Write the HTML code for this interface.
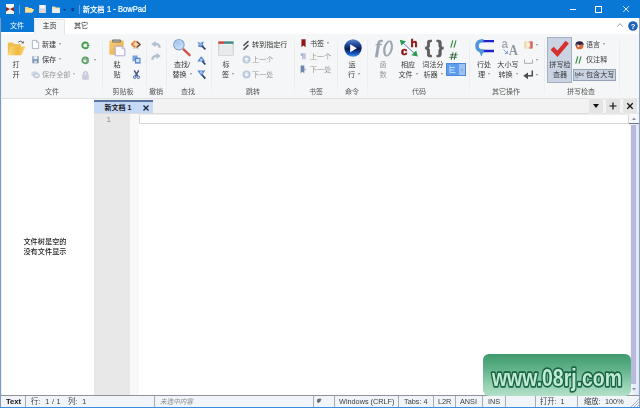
<!DOCTYPE html>
<html lang="zh-CN">
<head>
<meta charset="utf-8">
<title>新文档 1 - BowPad</title>
<style>
*{margin:0;padding:0;box-sizing:border-box}
html,body{width:640px;height:408px;overflow:hidden;background:#fff}
#root{position:absolute;left:0;top:0;width:640px;height:408px;overflow:hidden;filter:blur(0.4px)}
body{position:relative;font-family:"Liberation Sans","Noto Sans CJK SC",sans-serif;font-size:8px;line-height:10px;color:#222}
.a{position:absolute}
.t{position:absolute;white-space:nowrap;font-size:7.1px;line-height:10px;color:#383838}
.c{position:absolute;white-space:nowrap;font-size:7.1px;line-height:10px;text-align:center;color:#383838}
.g{color:#9a9a9a}
.sep{position:absolute;top:37px;height:57px;width:1px;background:linear-gradient(180deg,#f2f3f5 0,#eaecee 20%,#eaecee 80%,#f2f3f5 100%)}
.gl{position:absolute;top:86.500px;white-space:nowrap;font-size:7px;line-height:10px;text-align:center;color:#555;width:60px}
.dd{display:inline-block;width:0;height:0;border-left:1.7px solid transparent;border-right:1.7px solid transparent;border-top:2px solid #8c8c8c;vertical-align:middle;margin-left:3px;position:relative;top:-0.8px}
.ss{position:absolute;top:396px;height:11px;width:1px;background:#a3abb6}
.st{position:absolute;top:396.800px;white-space:nowrap;font-size:7.750px;line-height:10px;color:#3c3c3c;transform:scaleX(0.940);transform-origin:0 50%}
svg{position:absolute;overflow:visible}
</style>
</head>
<body>
<div id="root">

<!-- ===== title bar ===== -->
<div class="a" id="titlebar" style="left:0;top:0;width:640px;height:18px;background:#0877d6"></div>
<div class="a" id="filetab" style="left:0;top:18px;width:34px;height:14.300px;background:#0877d6"></div>
<div class="a" id="hometab" style="left:34px;top:19px;width:31px;height:14.500px;background:#f5f6f7;border:1px solid #e3e5e8;border-bottom:none"></div>
<div class="t" style="left:82.800px;top:4.500px;color:#fff;font-size:7.200px;font-weight:500;-webkit-text-stroke:0.200px #fff">新文档</div><div class="t" style="left:107.300px;top:4.300px;color:#fff;font-size:8.600px;transform:scaleX(0.880);transform-origin:0 50%;-webkit-text-stroke:0.200px #fff">1 - BowPad</div>
<div class="c" style="left:0;top:21.200px;width:34px;color:#fff">文件</div>
<div class="c" style="left:34px;top:21.200px;width:31px;color:#222">主页</div>
<div class="c" style="left:66px;top:21.200px;width:30px;color:#222">其它</div>


<!-- title bar icons -->
<svg style="left:6px;top:4px" width="8" height="10" viewBox="0 0 8 10"><rect x="0" y="0" width="8" height="10" fill="#f4f4f4"/><path d="M0 3 L4 5 L0 7.4Z M8 3 L4 5 L8 7.4Z" fill="#8a2a1a"/><rect x="0" y="0" width="8" height="2.2" fill="#fff"/></svg>
<div class="a" style="left:19px;top:5px;width:1px;height:9px;background:#5fa0e6"></div>
<svg style="left:25px;top:6px" width="9" height="7" viewBox="0 0 9 7"><path d="M0 1 L3 1 L4 2 L7 2 L7 3 L9 3.6 L7 6.6 L0 6.6Z" fill="#f6d57e"/><path d="M1.5 3.2 L9 3.2 L7.3 6.6 L0 6.6Z" fill="#fbe39b"/></svg>
<svg style="left:39px;top:5px" width="7" height="8" viewBox="0 0 7 8"><rect x="0" y="0" width="7" height="8" fill="#c9d3e4"/><rect x="1.2" y="0" width="4.6" height="3.4" fill="#f4f6fa"/><rect x="1.6" y="5" width="3.8" height="3" fill="#e8d9c8"/></svg>
<svg style="left:52px;top:6px" width="8" height="7" viewBox="0 0 8 7"><path d="M0 0.6 L3 0.6 L3.8 1.6 L8 1.6 L8 7 L0 7Z" fill="#f1dcae"/><rect x="0.6" y="2.6" width="6.8" height="4.4" fill="#e9ecf2"/></svg>
<svg style="left:62.800px;top:8.800px" width="3" height="2.300" viewBox="0 0 4 3"><path d="M0 0 L4 0 L2 2.4Z" fill="#1a2a78"/></svg>
<svg style="left:70.800px;top:7.600px" width="3.600" height="3.800" viewBox="0 0 5 5"><rect x="0.3" y="0" width="4.4" height="0.9" fill="#16206a"/><path d="M0 2 L5 2 L2.5 4.6Z" fill="#16206a"/></svg>
<div class="a" style="left:78.500px;top:5px;width:1px;height:9px;background:#5fa0e6"></div>

<!-- window controls -->
<div class="a" style="left:570px;top:9px;width:5.500px;height:1px;background:#fff"></div>
<div class="a" style="left:595px;top:6px;width:7px;height:6.500px;border:1px solid #fff"></div>
<svg style="left:622.500px;top:6.300px" width="6.200" height="6.200" viewBox="0 0 7 7"><path d="M0.3 0.3 L6.7 6.7 M6.7 0.3 L0.3 6.7" stroke="#fff" stroke-width="1" fill="none"/></svg>
<svg style="left:617px;top:23px" width="6" height="4" viewBox="0 0 6 4"><path d="M0.3 3.6 L3 0.6 L5.700 3.6" stroke="#8a8f96" stroke-width="0.9" fill="none"/></svg>
<svg style="left:628px;top:20.700px" width="10" height="10" viewBox="0 0 10 10"><circle cx="5" cy="5" r="4.8" fill="#1f63b8"/><text x="5" y="7.800" text-anchor="middle" font-family="Liberation Sans, sans-serif" font-size="7.500" font-weight="bold" fill="#fff">?</text></svg>

<!-- ===== ribbon ===== -->
<div class="a" id="ribbon" style="left:1px;top:33.500px;width:638px;height:65.500px;background:#f5f6f7;border-bottom:1px solid #e0e1e3"></div>


<!-- group separators -->
<div class="sep" style="left:102px"></div>
<div class="sep" style="left:146px"></div>
<div class="sep" style="left:166px"></div>
<div class="sep" style="left:211px"></div>
<div class="sep" style="left:294px"></div>
<div class="sep" style="left:337px"></div>
<div class="sep" style="left:367px"></div>
<div class="sep" style="left:469px"></div>
<div class="sep" style="left:544px"></div>
<div class="sep" style="left:619px"></div>

<!-- group labels -->
<div class="gl" style="left:22px">文件</div>
<div class="gl" style="left:93px">剪贴板</div>
<div class="gl" style="left:126px">撤销</div>
<div class="gl" style="left:158px">查找</div>
<div class="gl" style="left:223px">跳转</div>
<div class="gl" style="left:286px">书签</div>
<div class="gl" style="left:322px">命令</div>
<div class="gl" style="left:389px">代码</div>
<div class="gl" style="left:476px">其它操作</div>
<div class="gl" style="left:551px">拼写检查</div>

<!-- ==== group: 文件 ==== -->
<svg id="i-open" style="left:7px;top:39px" width="19" height="17" viewBox="0 0 19 17">
  <defs><linearGradient id="fg" x1="0" y1="0" x2="1" y2="0"><stop offset="0" stop-color="#f8de8a"/><stop offset="0.550" stop-color="#f3b83e"/><stop offset="1" stop-color="#f7d472"/></linearGradient></defs>
  <path d="M0.800 3.400 L5.800 3.400 L7.300 5 L13.800 5 L13.800 15.600 L0.800 15.600Z" fill="#eec050"/>
  <path d="M3.800 7.400 L18.600 7.400 L14.200 16.200 L0.600 16.200Z" fill="url(#fg)"/>
  <path d="M11.200 3.200 Q13.500 1 15.800 3.400" stroke="#4e5664" stroke-width="1" fill="none"/>
  <path d="M14.400 4.200 L16.800 4.400 L16.600 2Z" fill="#4e5664"/>
</svg>
<div class="c" style="left:6px;top:60px;width:20px">打</div>
<div class="c" style="left:6px;top:70px;width:20px">开</div>

<svg id="i-new" style="left:32px;top:40px" width="7" height="9" viewBox="0 0 7 9"><path d="M0.400 0.400 L4.600 0.400 L6.600 2.400 L6.600 8.600 L0.400 8.600Z" fill="#fdfdfe" stroke="#9aa7bb" stroke-width="0.8"/><path d="M4.600 0.400 L4.600 2.400 L6.600 2.400" fill="none" stroke="#9aa7bb" stroke-width="0.700"/></svg>
<div class="t" style="left:42px;top:40px">新建<i class="dd"></i></div>
<svg id="i-save" style="left:32px;top:56px" width="7" height="7.500" viewBox="0 0 8 9"><rect x="0.300" y="0.300" width="7.400" height="8.400" fill="#6c84a8"/><rect x="1.600" y="0.300" width="4.800" height="3.600" fill="#eef2f8"/><rect x="2" y="5.400" width="4" height="3.300" fill="#c9d3e6"/></svg>
<div class="t" style="left:42px;top:55px">保存<i class="dd"></i></div>
<svg id="i-saveall" style="left:31px;top:70px" width="9" height="9" viewBox="0 0 9 9"><ellipse cx="3.600" cy="4" rx="3.400" ry="2.800" fill="#cfd8e6"/><ellipse cx="5.600" cy="5.600" rx="3.200" ry="2.600" fill="#b7c3d6"/><ellipse cx="5.600" cy="5.400" rx="2" ry="1.500" fill="#e6ebf3"/></svg>
<div class="t g" style="left:42px;top:70px">保存全部<i class="dd" style="border-top-color:#aaa"></i></div>

<svg id="i-reload" style="left:80.500px;top:40.500px" width="10" height="9" viewBox="0 0 10 9"><circle cx="4.200" cy="4.400" r="2.900" fill="#eef7ee" stroke="#429c4c" stroke-width="1.900"/><path d="M5 2.400 L9.600 4.400 L5 6.600Z" fill="#f4faf4"/><path d="M5.800 3 L9 4.400 L5.800 6Z" fill="#429c4c"/></svg>
<svg id="i-reload2" style="left:80.500px;top:55.500px" width="10" height="9" viewBox="0 0 10 9"><circle cx="4.200" cy="4.400" r="2.900" fill="#eef3ee" stroke="#58a662" stroke-width="1.800"/><path d="M3 3.400 L5.400 3.400 L5.400 6.200 M7 3 L7 6.200" stroke="#9aa49c" stroke-width="1" fill="none"/></svg>
<i class="dd a" style="position:absolute;left:94px;top:59px;margin:0"></i>
<svg id="i-lock" style="left:82px;top:70.500px" width="7" height="9" viewBox="0 0 7 9"><path d="M1.700 4 L1.700 2.800 Q1.700 0.800 3.500 0.800 Q5.300 0.800 5.300 2.800 L5.300 4" stroke="#c6c9da" stroke-width="1.600" fill="none"/><rect x="0.200" y="3.400" width="6.600" height="5.400" rx="0.800" fill="#c9ccde"/></svg>

<!-- ==== group: 剪贴板 ==== -->
<svg id="i-paste" style="left:109px;top:39px" width="17" height="18" viewBox="0 0 17 18">
  <defs><linearGradient id="pg" x1="0" y1="0" x2="1" y2="1"><stop offset="0" stop-color="#f4cc78"/><stop offset="1" stop-color="#eeb044"/></linearGradient></defs>
  <rect x="0.300" y="1.400" width="14.400" height="14.400" rx="1" fill="url(#pg)"/>
  <rect x="3.200" y="0.600" width="8.600" height="2.800" rx="0.600" fill="#6e6a64"/>
  <rect x="4.200" y="1.600" width="6.600" height="0.900" fill="#d8d4cc"/>
  <path d="M6.200 7.200 L13.200 7.200 L15.800 9.800 L15.800 16.800 L6.200 16.800Z" fill="#fafaff" stroke="#9a98d4" stroke-width="0.800"/>
  <path d="M13.200 7.200 L13.200 9.800 L15.800 9.800" fill="#e4e4f6" stroke="#9a98d4" stroke-width="0.600"/>
</svg>
<div class="c" style="left:107px;top:60px;width:20px">粘</div>
<div class="c" style="left:107px;top:70px;width:20px">贴</div>
<svg id="i-copyhtml" style="left:131px;top:39.800px" width="10" height="9" viewBox="0 0 10 9"><ellipse cx="4.800" cy="4.400" rx="4.600" ry="3.800" fill="#f6d2a4"/><path d="M4.200 1 L0.800 4.200 L4.200 7.400" stroke="#e0803a" stroke-width="1.600" fill="none"/><path d="M5.600 1.400 L9 4.400 L5.600 7.400" stroke="#5a4a44" stroke-width="1.400" fill="none"/><path d="M2 8.300 L8 8.300" stroke="#c8c8cc" stroke-width="0.800"/></svg>
<svg id="i-copy" style="left:132px;top:55px" width="9" height="9" viewBox="0 0 9 9"><rect x="0.500" y="0.500" width="5.200" height="5.800" fill="#7fa3dc"/><rect x="3" y="2.800" width="5.500" height="5.800" fill="#4f7fcb"/><rect x="4.200" y="4" width="3.200" height="3.200" fill="#dbe7f8"/></svg>
<svg id="i-cut" style="left:132.500px;top:70px" width="7" height="9" viewBox="0 0 7 9"><path d="M1.200 0.300 L4.600 6 M5.800 0.300 L2.400 6" stroke="#4a5884" stroke-width="1.500" fill="none"/><circle cx="1.700" cy="7.200" r="1.300" fill="#d4dcf0" stroke="#4668ac" stroke-width="0.900"/><circle cx="5.300" cy="7.200" r="1.300" fill="#d4dcf0" stroke="#4668ac" stroke-width="0.900"/></svg>

<!-- ==== group: 撤销 ==== -->
<svg id="i-undo" style="left:151px;top:41px" width="10" height="7" viewBox="0 0 10 7"><path d="M8.600 6.800 Q8.800 2.800 4 2.900" stroke="#b2bfcf" stroke-width="2.400" fill="none"/><path d="M0.200 3 L4.600 0 L4.600 6Z" fill="#b2bfcf"/></svg>
<svg id="i-redo" style="left:151px;top:52.500px" width="10" height="7" viewBox="0 0 10 7"><path d="M1.400 6.800 Q1.200 2.800 6 2.900" stroke="#b2bfcf" stroke-width="2.400" fill="none"/><path d="M9.800 3 L5.400 0 L5.400 6Z" fill="#b2bfcf"/></svg>

<!-- ==== group: 查找 ==== -->
<svg id="i-find" style="left:173px;top:39px" width="19" height="18" viewBox="0 0 19 18">
  <defs><radialGradient id="lg" cx="0.400" cy="0.300" r="0.800"><stop offset="0" stop-color="#a4c6ee"/><stop offset="0.700" stop-color="#c8dff6"/><stop offset="1" stop-color="#eef5fc"/></radialGradient></defs>
  <path d="M10.600 10.400 L16.600 16.200" stroke="#d4524c" stroke-width="2.300" stroke-linecap="round"/>
  <circle cx="5.900" cy="5.700" r="5.200" fill="url(#lg)" stroke="#86a4cc" stroke-width="1.200"/>
</svg>
<div class="c" style="left:167px;top:60px;width:30px">查找/</div>
<div class="c" style="left:167px;top:70px;width:30px">替换<i class="dd"></i></div>
<svg id="i-f1" style="left:197px;top:40.500px" width="9" height="9" viewBox="0 0 9 9"><path d="M0.300 0.800 L3.400 2 L6.800 0.300 L5.800 3.600 L7 5.600 L3.600 6.200 L1 5.400 L1.800 3Z" fill="#5484cc"/><circle cx="3.600" cy="3.200" r="1.500" fill="#8fb2e4"/><path d="M5 5 L8.400 8.400" stroke="#2a3f70" stroke-width="1.700"/></svg>
<svg id="i-f2" style="left:197px;top:55.500px" width="9" height="9" viewBox="0 0 9 9"><path d="M4.200 0.300 L8.300 5.600 L0.300 5.600Z" fill="#4f80cc"/><circle cx="4.200" cy="4" r="1.400" fill="#a8c4ec"/><path d="M5.400 5.200 L8.300 8.500" stroke="#2a3f70" stroke-width="1.700"/></svg>
<svg id="i-f3" style="left:197px;top:70px" width="9" height="9" viewBox="0 0 9 9"><path d="M0.300 0.500 L8.300 0.500 L4.300 6Z" fill="#4f80cc"/><circle cx="4.200" cy="2.400" r="1.400" fill="#a8c4ec"/><path d="M5 4.800 L8.300 8.600" stroke="#2a3f70" stroke-width="1.700"/></svg>

<!-- ==== group: 跳转 ==== -->
<svg id="i-tabs" style="left:218px;top:41px" width="16" height="15" viewBox="0 0 16 15">
  <defs><linearGradient id="tg" x1="0" y1="0" x2="0" y2="1"><stop offset="0" stop-color="#d4d6d9"/><stop offset="1" stop-color="#eceded"/></linearGradient></defs>
  <rect x="0.300" y="1" width="15.200" height="13.600" fill="url(#tg)" stroke="#c6c8cc" stroke-width="0.600"/>
  <rect x="0.300" y="0.400" width="5.700" height="2.400" fill="#d0403c"/>
  <rect x="6" y="0.400" width="9.500" height="2.400" fill="#3f8c88"/>
  <rect x="1.800" y="4.200" width="12.200" height="9" fill="#e9eaeb"/><rect x="1.800" y="3.200" width="12.200" height="0.900" fill="#fafafa"/>
</svg>
<div class="c" style="left:216px;top:60px;width:20px">标</div>
<div class="c" style="left:216px;top:70px;width:24px">签<i class="dd"></i></div>
<svg id="i-goto" style="left:243px;top:40.500px" width="6" height="9" viewBox="0 0 6 9"><path d="M5 0.600 L0.900 4.300 M5 4.400 L0.900 8.300" stroke="#4c4c50" stroke-width="1.500" fill="none" stroke-linecap="round"/></svg>
<div class="t" style="left:252px;top:40px">转到指定行</div>
<svg id="i-prev" style="left:242px;top:55px" width="9" height="9" viewBox="0 0 9 9"><circle cx="4.500" cy="4.500" r="4" fill="#b9cadf"/><path d="M4.500 2 L7 5 L5.400 5 L5.400 7 L3.600 7 L3.600 5 L2 5Z" fill="#f2f6fb"/></svg>
<div class="t g" style="left:252px;top:55px">上一个</div>
<svg id="i-next" style="left:242px;top:70px" width="9" height="9" viewBox="0 0 9 9"><circle cx="4.500" cy="4.500" r="4" fill="#b9cadf"/><path d="M4.500 7 L7 4 L5.400 4 L5.400 2 L3.600 2 L3.600 4 L2 4Z" fill="#f2f6fb"/></svg>
<div class="t g" style="left:252px;top:70px">下一处</div>

<!-- ==== group: 书签 ==== -->
<svg id="i-bm" style="left:300.500px;top:39px" width="5" height="8.500" viewBox="0 0 6 10" preserveAspectRatio="none"><path d="M0.500 0.300 L5.500 0.300 L5.500 9.600 L3 7.600 L0.500 9.600Z" fill="#8e1a18"/></svg>
<div class="t" style="left:310px;top:38.500px">书签<i class="dd"></i></div>
<svg id="i-bmp" style="left:299.500px;top:52px" width="6.500" height="8.500" viewBox="0 0 8 10" preserveAspectRatio="none"><path d="M2.500 1.500 L7 1.500 L7 9.500 L4.700 7.600 L2.500 9.500Z" fill="#b7c6dc"/><path d="M0.300 3.200 L3 1 L3 5.400Z" fill="#8fa5c6"/></svg>
<div class="t g" style="left:310px;top:51.500px">上一个</div>
<svg id="i-bmn" style="left:300px;top:64.500px" width="6.500" height="8.800" viewBox="0 0 8 10" preserveAspectRatio="none"><path d="M0.800 0.500 L5.300 0.500 L5.300 9.500 L3 7.600 L0.800 9.500Z" fill="#6f87ae"/><path d="M7.800 5 L5 3 L5 7.200Z" fill="#a9b9d2"/></svg>
<div class="t g" style="left:310px;top:64.500px">下一处</div>

<!-- ==== group: 命令 ==== -->
<svg id="i-run" style="left:343.500px;top:39px" width="18" height="18" viewBox="0 0 18 18">
  <defs><linearGradient id="rg" x1="0" y1="0" x2="0" y2="1"><stop offset="0" stop-color="#5a86d4"/><stop offset="0.300" stop-color="#24489c"/><stop offset="0.550" stop-color="#0b1a4c"/><stop offset="0.800" stop-color="#1752b8"/><stop offset="1" stop-color="#3f92f2"/></linearGradient></defs>
  <circle cx="9" cy="9" r="8.700" fill="url(#rg)"/>
  <path d="M6.200 5.200 L12.800 9.200 L6.200 13.300Z" fill="#fff"/>
</svg>
<div class="c" style="left:342px;top:60px;width:20px">运</div>
<div class="c" style="left:342px;top:70px;width:24px">行<i class="dd"></i></div>

<!-- ==== group: 代码 ==== -->
<svg id="i-fx" style="left:373px;top:38px" width="22" height="20" viewBox="0 0 22 20"><text x="2.200" y="15" font-family="Liberation Serif, serif" font-style="italic" font-weight="bold" font-size="18" fill="#99a3b1" stroke="#99a3b1" stroke-width="0.500">f</text><text x="9.800" y="14.600" font-family="Liberation Sans, sans-serif" font-style="italic" font-size="16" fill="#99a3b1" stroke="#99a3b1" stroke-width="0.600" textLength="10.800" lengthAdjust="spacing">()</text></svg>
<div class="c g" style="left:373px;top:60px;width:20px">函</div>
<div class="c g" style="left:373px;top:70px;width:20px">数</div>

<svg id="i-ch" style="left:399px;top:39px" width="20" height="18" viewBox="0 0 20 18">
  <path d="M3.500 3.500 L16 15" stroke="#5f70b4" stroke-width="0.900"/>
  <path d="M0.800 0.800 L7 2.200 L2.400 6.600Z" fill="#2a9a52"/>
  <path d="M18.800 17.400 L12.400 16.200 L17.200 11.600Z" fill="#2a9a52"/>
  <text x="11.600" y="8.300" font-family="Liberation Sans, sans-serif" font-weight="bold" font-size="11.500" fill="#8a0c0c" stroke="#8a0c0c" stroke-width="0.500">h</text>
  <text x="2" y="15.800" font-family="Liberation Sans, sans-serif" font-weight="bold" font-size="11.500" fill="#8a0c0c" stroke="#8a0c0c" stroke-width="0.500">c</text>
</svg>
<div class="c" style="left:393px;top:60px;width:30px">相应</div>
<div class="c" style="left:393px;top:70px;width:30px">文件<i class="dd"></i></div>

<svg id="i-br" style="left:424.500px;top:36px" width="20" height="21" viewBox="0 0 20 21"><text x="0" y="16.500" font-family="Liberation Sans, sans-serif" font-weight="bold" font-size="18" fill="#5e5e5e" stroke="#5e5e5e" stroke-width="0.700" textLength="18.500" lengthAdjust="spacing">{}</text></svg>
<div class="c" style="left:418px;top:60px;width:30px">词法分</div>
<div class="c" style="left:418px;top:70px;width:30px">析器<i class="dd"></i></div>

<svg id="i-cm" style="left:449.500px;top:39.500px" width="7" height="8" viewBox="0 0 7 8"><path d="M2.800 0.300 L0.800 7.700 M6 0.300 L4 7.700" stroke="#2f8a3c" stroke-width="1.150"/></svg>
<svg id="i-hash" style="left:448.500px;top:52px" width="9" height="8" viewBox="0 0 9 8"><path d="M4 0.300 L2.200 7.700 M7 0.300 L5.200 7.700" stroke="#245c2c" stroke-width="0.950"/><path d="M1 2.800 L8.600 2.800 M0.300 5.300 L7.900 5.300" stroke="#245c2c" stroke-width="0.800"/></svg>
<div class="a" id="b-fold" style="left:446px;top:63px;width:20px;height:13px;background:#5c9cee;border:1px solid #4d89d8"></div>
<div class="a" style="left:459px;top:64px;width:6px;height:11px;background:#9cc2f4"></div>
<svg style="left:449px;top:65px" width="8" height="9" viewBox="0 0 8 9"><path d="M1 0.500 L1 7.500 L6.500 7.500 M1 2.500 L6 2.500 M1 5 L5 5" stroke="#cfe0f8" stroke-width="0.900" fill="none"/></svg>
<i class="dd a" style="position:absolute;left:460.500px;top:69px;margin:0;border-top-color:#7a93b8"></i>

<!-- ==== group: 其它操作 ==== -->
<svg id="i-line" style="left:475px;top:39px" width="20" height="18" viewBox="0 0 20 18">
  <path d="M7.500 2.200 L19 2.200 M7.500 12 L19 12" stroke="#2222cc" stroke-width="2.300"/>
  <path d="M8.500 1.800 Q2 1.400 2 7 Q2 12.300 8.500 12" stroke="#4f96dc" stroke-width="3.600" fill="none"/>
  <path d="M3.600 11 L9 11.500 L6.400 17.400Z" fill="#4f96dc"/>
</svg>
<div class="c" style="left:469px;top:60px;width:30px">行处</div>
<div class="c" style="left:469px;top:70px;width:30px">理<i class="dd"></i></div>

<svg id="i-aa" style="left:500px;top:38px" width="20" height="20" viewBox="0 0 20 20">
  <text x="1.500" y="9.800" font-family="Liberation Sans, sans-serif" font-weight="bold" font-size="13" fill="#a7adb8" textLength="6.500" lengthAdjust="spacingAndGlyphs">a</text>
  <text x="8.800" y="17.300" font-family="Liberation Serif, serif" font-weight="bold" font-size="14" fill="#9198a4" textLength="9.200" lengthAdjust="spacingAndGlyphs">A</text>
  <path d="M3.500 11.500 L7.500 15.500 M7.500 15.500 L4.800 15.300 M7.500 15.500 L7.300 12.800" stroke="#7fa0d8" stroke-width="1" fill="none"/>
</svg>
<div class="c" style="left:493px;top:60px;width:30px">大小写</div>
<div class="c" style="left:493px;top:70px;width:30px">转换<i class="dd"></i></div>

<svg id="i-o1" style="left:524px;top:40.500px" width="9" height="8" viewBox="0 0 9 8"><defs><linearGradient id="og" x1="0" y1="0" x2="1" y2="0"><stop offset="0" stop-color="#ead596"/><stop offset="0.450" stop-color="#f6e6dc"/><stop offset="0.700" stop-color="#e09078"/><stop offset="1" stop-color="#c2463a"/></linearGradient></defs><rect x="0.200" y="0.200" width="8.400" height="7.600" rx="1" fill="url(#og)"/><rect x="3" y="1.800" width="3" height="4" fill="#fbf3ee" opacity="0.800"/></svg>
<i class="dd a" style="position:absolute;left:536px;top:44px;margin:0"></i>
<svg id="i-o2" style="left:524px;top:59px" width="9" height="5" viewBox="0 0 9 5"><path d="M0.500 0.500 L0.500 4.300 L8.500 4.300 L8.500 0.500" stroke="#a4a4a4" stroke-width="0.900" fill="none"/></svg>
<i class="dd a" style="position:absolute;left:536px;top:59px;margin:0"></i>
<svg id="i-o3" style="left:523px;top:70px" width="11" height="9.500" viewBox="0 0 11 9.500"><path d="M9.300 0.500 L9.300 5.800 L3 5.800" stroke="#4c4c4c" stroke-width="1.500" fill="none"/><path d="M0.300 5.800 L5 2.400 L5 9.200Z" fill="#4c4c4c"/></svg>
<i class="dd a" style="position:absolute;left:536px;top:74px;margin:0"></i>

<!-- ==== group: 拼写检查 ==== -->
<div class="a" id="b-spell" style="left:547px;top:36.500px;width:25px;height:46px;background:#c9d3e2;border:1px solid #a3afc2"></div>
<svg id="i-check" style="left:550px;top:40px" width="19" height="17" viewBox="0 0 19 17"><path d="M2.200 8.200 L7.400 13.800 L17.200 2.200" stroke="#d7302c" stroke-width="4.300" fill="none" stroke-linejoin="miter"/></svg>
<div class="c" style="left:545px;top:60px;width:30px">拼写检</div>
<div class="c" style="left:545px;top:70px;width:30px">查器</div>

<svg id="i-lang" style="left:574.500px;top:40.500px" width="9" height="8.500" viewBox="0 0 9 8.500"><ellipse cx="4.600" cy="5.200" rx="3.600" ry="3.100" fill="#e0682c"/><ellipse cx="3.400" cy="5" rx="1.200" ry="1" fill="#fbe4d4"/><path d="M0.300 4.600 Q0.300 0.300 4.500 0.300 Q8.800 0.300 8.800 4.600 L7 3.200 L4.600 4 L2.200 3 Z" fill="#2a2446"/><path d="M0.300 4.600 L2.200 3 L1.600 6.400Z" fill="#4a58a8"/></svg>
<div class="t" style="left:586px;top:40px">语言<i class="dd"></i></div>
<svg id="i-cm2" style="left:575px;top:55.500px" width="7" height="8" viewBox="0 0 7 8"><path d="M2.800 0.300 L0.800 7.700 M6 0.300 L4 7.700" stroke="#2f8a3c" stroke-width="1.150"/></svg>
<div class="t" style="left:586px;top:55px">仅注释</div>
<div class="a" id="b-upper" style="left:573px;top:68.500px;width:43px;height:12.500px;background:#c9d3e2;border:1px solid #96a2b6"></div>
<svg id="i-up" style="left:575px;top:71px" width="9" height="8" viewBox="0 0 9 8"><text x="0" y="4.500" font-family="Liberation Sans, sans-serif" font-size="4.500" font-weight="bold" fill="#555">labc</text><rect x="0.300" y="5.600" width="3" height="1.600" fill="#98a2b2"/></svg>
<div class="t" style="left:586px;top:70px">包含大写</div>

<!-- ===== doc tab bar ===== -->
<div class="a" id="tabbar" style="left:94px;top:99px;width:545px;height:15px;background:#f2f2f2;border-bottom:1px solid #dcdcdc"></div>
<div class="a" id="doctab" style="left:94px;top:99.600px;width:59px;height:13.400px;background:#c6daf6;border-top:2px solid #5a74a0"></div>
<div class="t" style="left:104.500px;top:102.500px;font-weight:bold;color:#161616;font-size:7px">新文档 1</div>

<!-- ===== editor ===== -->
<div class="a" id="lnmargin" style="left:94px;top:114px;width:36px;height:281px;background:#e8e8e8"></div>
<div class="a" id="foldmargin" style="left:130px;top:114px;width:9px;height:281px;background:#f8f8f8"></div>
<div class="t g" style="left:106.500px;top:114.500px;font-size:8px;color:#8c8c8c">1</div>
<div class="a" id="caretline" style="left:139px;top:114px;width:490px;height:10px;border:1px solid #d8d8d8;border-top-color:#ececec"></div>

<!-- left panel text -->
<div class="c" style="left:-1px;top:236.800px;width:92px;color:#1c1c1c;font-size:7.200px;font-weight:500">文件树是空的</div>
<div class="c" style="left:-1px;top:247.200px;width:92px;color:#1c1c1c;font-size:7.200px;font-weight:500">没有文件显示</div>

<!-- ===== status bar ===== -->
<div class="a" id="status" style="left:1px;top:395px;width:638px;height:13px;background:#f1f4f9;border-top:1px solid #8e9299"></div>


<!-- doc tab close + tab bar buttons -->
<svg style="left:143px;top:104.500px" width="6" height="6" viewBox="0 0 6 6"><path d="M0.500 0.500 L5.500 5.500 M5.500 0.500 L0.500 5.500" stroke="#1c2438" stroke-width="1.300" fill="none"/></svg>
<div class="a" style="left:588.5px;top:99px;width:14.500px;height:13.700px;background:#e4e4e4;box-shadow:0 0 0 0.500px #f6f6f6"></div>
<div class="a" style="left:605.5px;top:99px;width:14.500px;height:13.700px;background:#e4e4e4;box-shadow:0 0 0 0.500px #f6f6f6"></div>
<div class="a" style="left:622.5px;top:99px;width:14.500px;height:13.700px;background:#e4e4e4;box-shadow:0 0 0 0.500px #f6f6f6"></div>
<svg style="left:593px;top:104px" width="6" height="4" viewBox="0 0 6 4"><path d="M0 0 L6 0 L3 4Z" fill="#111"/></svg>
<svg style="left:609px;top:102px" width="8" height="8" viewBox="0 0 8 8"><path d="M4 0.500 L4 7.500 M0.500 4 L7.500 4" stroke="#111" stroke-width="1.200"/></svg>
<svg style="left:627px;top:103px" width="6" height="6" viewBox="0 0 6 6"><path d="M0.300 0.300 L5.700 5.700 M5.700 0.300 L0.300 5.700" stroke="#111" stroke-width="1.300" fill="none"/></svg>

<!-- scrollbar -->
<div class="a" id="sbtrack" style="left:629px;top:114px;width:10px;height:281px;background:linear-gradient(90deg,#ffffff 0,#eef3fb 20%,#dfe6f5 100%)"></div>
<div class="a" style="left:629px;top:114px;width:10px;height:10px;background:#f6f8fc;border-bottom:1px solid #6a7480"></div>
<svg style="left:632px;top:117px" width="4" height="3" viewBox="0 0 4 3"><path d="M0 3 L2 0.400 L4 3Z" fill="#8a90a4"/></svg>
<div class="a" id="sbthumb" style="left:631px;top:125px;width:5px;height:259px;background:#b9b9dc"></div>
<svg style="left:632px;top:388px" width="4" height="3" viewBox="0 0 4 3"><path d="M0 0 L4 0 L2 2.600Z" fill="#8a90a4"/></svg>

<!-- watermark -->
<div class="a" id="wm" style="left:483px;top:353.700px;width:148px;height:42.600px;border-radius:6px;background:linear-gradient(180deg,#3f9a6d 0%,#5fb088 35%,#8fcfae 70%,#b3e0c9 100%)"></div>
<svg style="left:483px;top:354px" width="148" height="42" viewBox="0 0 148 42"><text x="74" y="31.500" text-anchor="middle" font-family="Liberation Sans, sans-serif" font-weight="bold" font-size="24" fill="#bfead4" stroke="#1a6642" stroke-width="3.300" paint-order="stroke" stroke-linejoin="round" textLength="130" lengthAdjust="spacingAndGlyphs">www.08rj.com</text></svg>

<!-- status bar content -->
<div class="st" style="left:5.800px;font-weight:bold;color:#111;font-size:8.100px">Text</div>
<div class="ss" style="left:25px"></div>
<div class="st" style="left:30.500px;word-spacing:0.600px">行:<span style="margin-left:2.500px"></span> 1 / 1</div>
<div class="st" style="left:68px">列:<span style="margin-left:3px"></span> 1</div>
<div class="ss" style="left:154px"></div>
<div class="st" style="left:160px;font-style:italic;color:#8a8a8a;font-size:7px">未选中内容</div>
<div class="ss" style="left:313px"></div>
<svg style="left:316px;top:398px" width="6" height="6" viewBox="0 0 6 6"><path d="M1 1.500 Q4 0 5.500 1 Q5 4 2 5 Q0.500 4 1 1.500Z" fill="#6a6f78"/></svg>
<div class="ss" style="left:334px"></div>
<div class="st" style="left:339px">Windows (CRLF)</div>
<div class="ss" style="left:398px"></div>
<div class="st" style="left:403.500px">Tabs: 4</div>
<div class="ss" style="left:433px"></div>
<div class="st" style="left:438px">L2R</div>
<div class="ss" style="left:455px"></div>
<div class="st" style="left:460px">ANSI</div>
<div class="ss" style="left:482px"></div>
<div class="st" style="left:488px">INS</div>
<div class="ss" style="left:505px"></div>
<div class="ss" style="left:535px"></div>
<div class="st" style="left:539.500px">打开:<span style="margin-left:2px"></span> 1</div>
<div class="ss" style="left:577px"></div>
<div class="st" style="left:583.500px">缩放:<span style="margin-left:2.500px"></span> 100%</div>
<svg style="left:631px;top:399px" width="8" height="8" viewBox="0 0 8 8"><path d="M8 0 L0 8 M8 3 L3 8 M8 6 L6 8" stroke="#a8b4c6" stroke-width="1"/></svg>

<!-- window border -->
<div class="a" style="left:0;top:18px;width:1px;height:390px;background:#7d9bbd"></div><div class="a" style="left:1px;top:33px;width:1px;height:362px;background:#e4f1fa"></div>
<div class="a" style="left:639px;top:18px;width:1px;height:390px;background:#8aa5c4"></div>
<div class="a" style="left:0;top:406.700px;width:640px;height:1.300px;background:#3a8cdc"></div>

</div>
</body>
</html>
